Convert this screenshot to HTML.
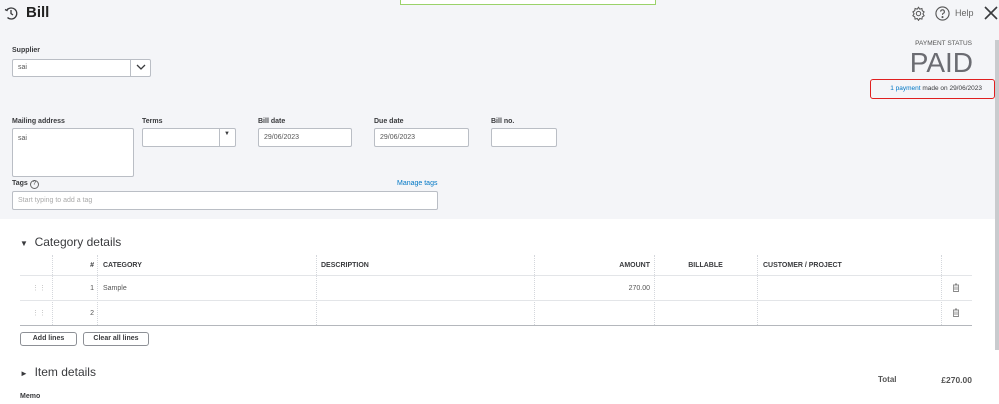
<!DOCTYPE html>
<html><head><style>
*{box-sizing:border-box;margin:0;padding:0}
body{width:999px;height:404px;overflow:hidden;background:#fff;font-family:"Liberation Sans",sans-serif;color:#393a3d;position:relative}
.hdr{position:absolute;left:0;top:0;width:999px;height:219px;background:#f4f5f8}
.a{position:absolute}
.lbl{font-size:7px;font-weight:bold;color:#393a3d}
.inp{position:absolute;background:#fff;border:1px solid #babec5;border-radius:2px;font-size:7px;color:#555;padding:0 5px}
.th{position:absolute;top:255px;height:21px;font-size:7px;font-weight:bold;line-height:21px;color:#393a3d}
.vl{position:absolute;top:255px;height:70px;border-left:1px dotted #d4d7dc}
.hl{position:absolute;left:20px;width:952px;border-top:1px solid #e3e5e8}
.btn{position:absolute;height:14px;border:1px solid #8d9096;border-radius:3px;font-size:7px;font-weight:bold;text-align:center;line-height:12px;background:#fff}
.td{position:absolute;font-size:7px;color:#555}
</style></head><body>
<div class="hdr"></div>
<div class="a" style="left:400px;top:0;width:256px;height:5px;border:1px solid #9bd26a;border-top:none;background:#fff"></div>
<svg class="a" style="left:4px;top:6px" width="14" height="14" viewBox="0 0 14 14" fill="none" stroke="#393a3d" stroke-width="1.3"><path d="M3 4A5.5 5.5 0 1 1 3.5 11.5"/><path d="M1 3.5L3 4.5 4 2.5"/><path d="M7 4v3.5l2 1.5"/></svg>
<div class="a" style="left:26px;top:4px;font-size:15px;font-weight:bold;color:#222">Bill</div>
<svg class="a" style="left:911px;top:6px" width="15" height="15" viewBox="0 0 24 24" fill="none" stroke="#555" stroke-width="1.6"><circle cx="12" cy="12" r="3.5"/><path d="M12 2l2 3 3.5-1 .5 3.5 3 2-2 3 2 3-3 2-.5 3.5-3.5-1-2 3-2-3-3.5 1-.5-3.5-3-2 2-3-2-3 3-2 .5-3.5 3.5 1z"/></svg>
<svg class="a" style="left:935px;top:6px" width="15" height="15" viewBox="0 0 16 16" fill="none" stroke="#555" stroke-width="1.2"><circle cx="8" cy="8" r="7"/><path d="M6 6a2 2 0 1 1 2.5 2c-.5.3-.5.8-.5 1.5"/><circle cx="8" cy="11.8" r=".5" fill="#555"/></svg>
<div class="a" style="left:955px;top:8px;font-size:9px;color:#666">Help</div>
<svg class="a" style="left:984px;top:6px" width="14" height="14" viewBox="0 0 14 14" stroke="#393a3d" stroke-width="1.6"><path d="M1 1l12 12M13 1L1 13"/></svg>
<div class="a" style="left:995px;top:40px;width:4px;height:310px;background:#c9cbce"></div>
<div class="a" style="left:900px;top:40px;width:72px;text-align:right;font-size:6.5px;color:#555">PAYMENT STATUS</div>
<div class="a" style="left:880px;top:47px;width:93px;text-align:right;font-size:28px;color:#6b6c72">PAID</div>
<div class="a" style="left:870px;top:79px;width:125px;height:20px;border:1.5px solid #e02020;border-radius:3px"></div>
<div class="a" style="left:870px;top:85px;width:112px;text-align:right;font-size:6.5px;color:#393a3d"><span style="color:#0077c5">1 payment</span> made on 29/06/2023</div>

<div class="a lbl" style="left:12px;top:47px">Supplier</div>
<div class="inp" style="left:12px;top:59px;width:139px;height:18px;line-height:16px">sai</div>
<div class="a" style="left:130px;top:60px;width:1px;height:16px;background:#babec5"></div>
<svg class="a" style="left:136px;top:64px" width="10" height="7" viewBox="0 0 10 7" fill="none" stroke="#393a3d" stroke-width="1.3"><path d="M1 1l4 4 4-4"/></svg>

<div class="a lbl" style="left:12px;top:118px">Mailing address</div>
<div class="inp" style="left:12px;top:128px;width:122px;height:49px;padding-top:6px">sai</div>
<div class="a lbl" style="left:142px;top:118px">Terms</div>
<div class="inp" style="left:142px;top:128px;width:94px;height:19px"></div>
<div class="a" style="left:219px;top:129px;width:1px;height:17px;background:#babec5"></div>
<div class="a" style="left:224px;top:131px;font-size:6px">▼</div>
<div class="a lbl" style="left:258px;top:118px">Bill date</div>
<div class="inp" style="left:258px;top:128px;width:94px;height:19px;line-height:17px">29/06/2023</div>
<div class="a lbl" style="left:374px;top:118px">Due date</div>
<div class="inp" style="left:374px;top:128px;width:95px;height:19px;line-height:17px">29/06/2023</div>
<div class="a lbl" style="left:491px;top:118px">Bill no.</div>
<div class="inp" style="left:491px;top:128px;width:66px;height:19px"></div>
<div class="a lbl" style="left:12px;top:180px">Tags <span style="display:inline-block;width:9px;height:9px;border:1px solid #666;border-radius:50%;font-size:6px;text-align:center;line-height:7px;font-weight:normal">?</span></div>
<div class="a" style="left:397px;top:180px;font-size:7px;color:#0077c5">Manage tags</div>
<div class="inp" style="left:12px;top:191px;width:426px;height:19px;line-height:17px;color:#aaa">Start typing to add a tag</div>

<div class="a" style="left:20px;top:235px;font-size:12px;color:#393a3d"><span style="font-size:8px">▼</span>&nbsp; Category details</div>
<div class="vl" style="left:52px"></div><div class="vl" style="left:97px"></div><div class="vl" style="left:316px"></div><div class="vl" style="left:534px"></div><div class="vl" style="left:654px"></div><div class="vl" style="left:757px"></div><div class="vl" style="left:941px"></div>
<div class="th" style="left:52px;width:42px;text-align:right">#</div>
<div class="th" style="left:103px">CATEGORY</div>
<div class="th" style="left:321px">DESCRIPTION</div>
<div class="th" style="left:534px;width:116px;text-align:right">AMOUNT</div>
<div class="th" style="left:654px;width:103px;text-align:center">BILLABLE</div>
<div class="th" style="left:763px">CUSTOMER / PROJECT</div>
<div class="hl" style="top:275px;border-top:1.5px solid #e3e5e8"></div>
<div class="hl" style="top:300px"></div>
<div class="hl" style="top:325px;border-top:1.5px solid #b4b7bc"></div>
<div class="td" style="left:32px;top:284px;color:#bbb">⋮⋮</div>
<div class="td" style="left:32px;top:309px;color:#bbb">⋮⋮</div>
<div class="td" style="left:52px;top:285px;width:42px;text-align:right">1</div>
<div class="td" style="left:52px;top:310px;width:42px;text-align:right">2</div>
<div class="td" style="left:103px;top:285px">Sample</div>
<div class="td" style="left:534px;top:285px;width:116px;text-align:right">270.00</div>
<svg class="a" style="left:952px;top:283px" width="8" height="9" viewBox="0 0 8 9" fill="none" stroke="#888" stroke-width=".9"><path d="M1 2h6M3 1h2M1.5 2v6.5h5V2M3 3.5v3.5M5 3.5v3.5"/></svg>
<svg class="a" style="left:952px;top:308px" width="8" height="9" viewBox="0 0 8 9" fill="none" stroke="#888" stroke-width=".9"><path d="M1 2h6M3 1h2M1.5 2v6.5h5V2M3 3.5v3.5M5 3.5v3.5"/></svg>
<div class="btn" style="left:20px;top:332px;width:57px">Add lines</div>
<div class="btn" style="left:83px;top:332px;width:66px">Clear all lines</div>
<div class="a" style="left:20px;top:365px;font-size:12px;color:#393a3d"><span style="font-size:8px">►</span>&nbsp; Item details</div>
<div class="a" style="left:878px;top:375px;font-size:8px;font-weight:bold;color:#555">Total</div>
<div class="a" style="left:900px;top:375px;width:72px;text-align:right;font-size:8.5px;font-weight:bold;color:#555">£270.00</div>
<div class="a lbl" style="left:20px;top:393px">Memo</div>
</body></html>
